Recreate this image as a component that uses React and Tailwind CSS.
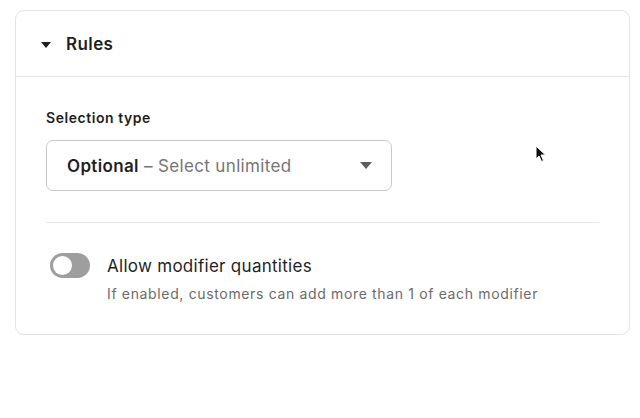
export default function App() {
  return (
    <div className="relative w-[640px] h-[418px] bg-white pt-[10px] pl-[15px]" style={{ fontFamily: 'Inter, "Noto Sans", sans-serif' }}>
      <section className="w-[615px] h-[325px] rounded-[9px] border border-[#e3e3e3] bg-white">
        <header className="flex items-center h-[66px] border-b border-[#e6e6e6] pl-[25px] pt-[2px]">
          <svg width="10" height="6" viewBox="0 0 10 6" className="mr-[15px]">
            <path d="M0 0 L10 0 L5 6 Z" fill="#1f1f1f" />
          </svg>
          <h2 className="text-[17px] font-semibold tracking-[0.4px] text-[#1f1f1f]">Rules</h2>
        </header>

        <div className="px-[30px] pt-[31px]">
          <label className="block text-[14px] font-semibold leading-[20px] tracking-[0.55px] text-[#1f1f1f]">Selection type</label>
          <div className="mt-[12px] flex items-center justify-between w-[346px] h-[51px] rounded-[7px] border border-[#c9c9c9] pl-[20px] pr-[19px]">
            <span className="pt-[3px] text-[17px] tracking-[0.35px] text-[#757575]">
              <span className="font-semibold text-[#1f1f1f]">Optional</span> – Select unlimited
            </span>
            <svg width="12" height="7" viewBox="0 0 12 7">
              <path d="M0 0 L12 0 L6 7 Z" fill="#5f5f5f" />
            </svg>
          </div>

          <div className="mt-[31px] h-px bg-[#e6e6e6]" />

          <div className="mt-[30px] flex items-start">
            <div className="ml-[4px] w-[40px] h-[25px] rounded-full bg-[#9e9e9e] p-[3px] flex items-center">
              <div className="w-[19px] h-[19px] rounded-full bg-white" />
            </div>
            <div className="ml-[17px] pt-[1px]">
              <div className="text-[17px] leading-[25px] tracking-[0.28px] text-[#1f1f1f]">Allow modifier quantities</div>
              <div className="mt-[5px] text-[14px] leading-[20px] tracking-[0.65px] text-[#6b6b6b]">If enabled, customers can add more than 1 of each modifier</div>
            </div>
          </div>
        </div>
      </section>

      <svg className="absolute left-[535px] top-[145px]" width="12" height="18" viewBox="0 0 12 18">
        <path d="M1 1 L1 14 L4 11 L6.5 16.5 L8.5 15.5 L6 10 L10.5 10 Z" fill="#111" stroke="#fff" strokeWidth="1" />
      </svg>
    </div>
  );
}
